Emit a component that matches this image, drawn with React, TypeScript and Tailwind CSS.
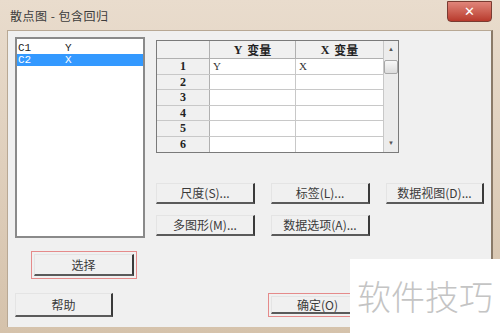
import React from 'react';

const cjk = { fontFamily: '"Noto Sans CJK SC", "Noto Sans", sans-serif' };

const Btn: React.FC<{ label: string; className?: string; focus?: boolean }> = ({ label, className = '', focus }) => {
  const inner = (
    <div
      className={`flex items-center justify-center h-full bg-[#f0f0f0] border-t border-l border-[#e4e4e4] border-r-2 border-b-2 border-r-[#3a3a3a] border-b-[#5a5a5a] text-[12px] text-[#3a3a3a] ${focus ? '' : className}`}
      style={cjk}
    >
      {label}
    </div>
  );
  if (focus) {
    return <div className={`border border-[#e58a8a] p-[2px] ${className}`}>{inner}</div>;
  }
  return inner;
};

const rows = [1, 2, 3, 4, 5, 6];

const App: React.FC = () => {
  return (
    <div className="relative w-[500px] h-[333px] overflow-hidden bg-gradient-to-b from-[#e9dccd] to-[#d5c2ab] select-none">
      {/* Title bar */}
      <div className="flex items-start h-[30px] pl-[10px]">
        <span className="mt-[7px] text-[12px] text-[#3c3c3c] tracking-[0.5px]" style={cjk}>散点图 - 包含回归</span>
        <div className="ml-auto mr-[8px] mt-[1px] w-[45px] h-[21px] rounded-b-[4px] border border-[#7a3b32] bg-gradient-to-b from-[#e0857a] to-[#b8392c] flex items-center justify-center">
          <span className="text-white text-[13px] font-bold leading-none" style={{ fontFamily: '"DejaVu Sans", sans-serif' }}>✕</span>
        </div>
      </div>

      {/* Client area */}
      <div className="mx-[7px] h-[297px] bg-[#f0f0f0] border-t border-l border-[#b8a894] border-r-2 border-r-[#8a7a68] flex flex-col px-[7px] pt-[6px]">
        <div className="flex">
          {/* Left column */}
          <div className="w-[132px] flex flex-col">
            <div className="h-[201px] bg-white border-2 border-[#8a8a8a] pt-[3px]" style={{ fontFamily: '"Liberation Mono", monospace' }}>
              <div className="flex h-[12px] items-center text-[11px] text-[#222] pl-[1px]">
                <span className="w-[47px]">C1</span><span>Y</span>
              </div>
              <div className="flex h-[12px] items-center text-[11px] text-white bg-[#3399ff] pl-[1px]">
                <span className="w-[47px]">C2</span><span>X</span>
              </div>
            </div>
            <Btn label="选择" focus className="ml-[16px] mt-[13px] w-[106px] h-[28px]" />
          </div>

          {/* Right column */}
          <div className="ml-[11px] flex flex-col">
            <div className="mt-[3px] w-[243px] h-[113px] border border-[#7a7a7a] bg-white flex">
              <div className="w-[226px] flex flex-col">
                <div className="flex h-[18px] bg-[#f0f0f0] border-b border-[#b0b0b0] text-[12px] font-bold text-[#222]">
                  <div className="w-[53px] border-r border-[#b0b0b0]" />
                  <div className="w-[86px] border-r border-[#b0b0b0] flex items-center justify-center gap-[5px]">
                    <span style={{ fontFamily: '"Liberation Serif", serif' }}>Y</span><span style={cjk}>变量</span>
                  </div>
                  <div className="flex-1 flex items-center justify-center gap-[5px]">
                    <span style={{ fontFamily: '"Liberation Serif", serif' }}>X</span><span style={cjk}>变量</span>
                  </div>
                </div>
                {rows.map((r) => (
                  <div key={r} className="flex h-[15.5px] border-b border-[#c8c8c8] last:border-b-0 text-[12px]">
                    <div className="w-[53px] bg-[#f0f0f0] border-r border-[#b0b0b0] flex items-center justify-center font-bold text-[#222]" style={{ fontFamily: '"Liberation Serif", serif' }}>{r}</div>
                    <div className="w-[86px] border-r border-[#c8c8c8] flex items-center pl-[3px] text-[11px] text-[#333]" style={{ fontFamily: '"Liberation Serif", serif' }}>{r === 1 ? 'Y' : ''}</div>
                    <div className="flex-1 flex items-center pl-[3px] text-[11px] text-[#333]" style={{ fontFamily: '"Liberation Serif", serif' }}>{r === 1 ? 'X' : ''}</div>
                  </div>
                ))}
              </div>
              <div className="flex-1 bg-[#ececec] border-l border-[#c8c8c8] flex flex-col items-center">
                <span className="text-[6px] leading-none text-[#555] mt-[5px]">▲</span>
                <div className="mt-[8px] w-[14px] h-[14px] bg-gradient-to-b from-[#f8f8f8] to-[#dcdcdc] border border-[#a8a8a8] rounded-[2px]" />
                <span className="mt-auto mb-[6px] text-[6px] leading-none text-[#555]">▼</span>
              </div>
            </div>

            <div className="mt-[30px] flex gap-[16px]">
              <Btn label="尺度(S)..." className="w-[99px] h-[24px]" />
              <Btn label="标签(L)..." className="w-[99px] h-[24px]" />
              <Btn label="数据视图(D)..." className="w-[98px] h-[24px]" />
            </div>
            <div className="mt-[11px] flex gap-[16px]">
              <Btn label="多图形(M)..." className="w-[99px] h-[24px]" />
              <Btn label="数据选项(A)..." className="w-[99px] h-[24px]" />
            </div>
          </div>
        </div>

        {/* Bottom row */}
        <div className="mt-[14px] flex items-start">
          <Btn label="帮助" className="w-[98px] h-[24px]" />
          <Btn label="确定(O)" focus className="ml-[155px] w-[100px] h-[24px]" />
        </div>
      </div>

      {/* Watermark */}
      <div className="absolute left-[350px] top-[259px] w-[150px] h-[74px] bg-white flex items-center pl-[7px]">
        <span className="text-[34px] leading-none text-[#c4c4c4] font-light" style={cjk}>软件技巧</span>
      </div>
    </div>
  );
};

export default App;
